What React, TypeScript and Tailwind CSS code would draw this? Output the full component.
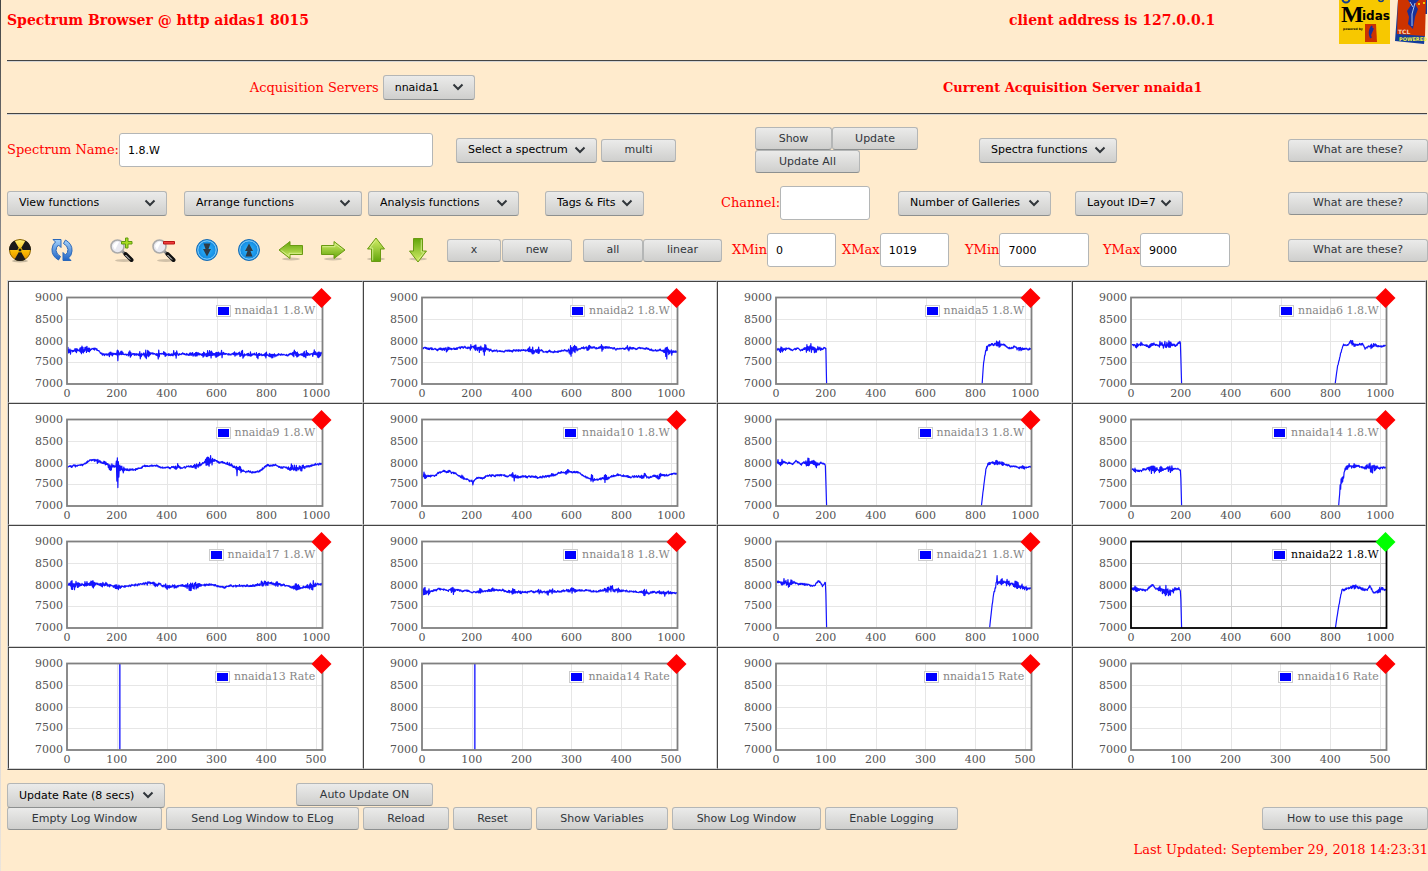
import type { ReactNode } from 'react';

type Point = [number, number];
type Burst = [center: number, width: number, amplitude: number];

interface Spectrum {
    name: string;
    xMax: number;
    active?: boolean;
    segments: Point[][];
    bursts: Burst[];
    spike?: number;
}

const SPECTRA: Spectrum[] = [
    {
        name: 'nnaida1 1.8.W',
        xMax: 1023,
        segments: [[[0, 7780], [30, 7765], [60, 7800], [90, 7810], [115, 7825], [140, 7690], [198, 7690], [200, 7790], [202, 7510], [204, 7780], [206, 7690], [400, 7690], [700, 7695], [870, 7680], [1023, 7695]]],
        bursts: [[5, 12, 50], [30, 10, 40], [55, 8, 60], [75, 10, 60], [172, 6, 60], [200, 3, 50], [215, 8, 50], [250, 4, 70], [290, 5, 60], [318, 8, 80], [365, 5, 80], [390, 8, 40], [432, 10, 60], [510, 12, 40], [545, 3, 100], [563, 6, 60], [575, 6, 80], [600, 8, 50], [620, 5, 70], [670, 5, 40], [700, 8, 80], [730, 8, 50], [760, 5, 80], [798, 4, 90], [820, 10, 40], [915, 8, 80], [955, 6, 90], [990, 5, 60], [1010, 10, 40]],
    },
    {
        name: 'nnaida2 1.8.W',
        xMax: 1023,
        segments: [[[0, 7830], [60, 7800], [120, 7820], [200, 7850], [240, 7820], [280, 7770], [420, 7780], [480, 7760], [520, 7750], [570, 7790], [620, 7820], [680, 7830], [720, 7860], [780, 7830], [880, 7830], [940, 7780], [1000, 7750], [1023, 7770]]],
        bursts: [[82, 6, 50], [100, 8, 30], [195, 4, 40], [222, 8, 100], [248, 8, 90], [430, 4, 60], [445, 6, 80], [465, 5, 70], [595, 5, 120], [612, 7, 80], [665, 5, 50], [720, 4, 60], [825, 6, 50], [980, 6, 150], [995, 8, 60]],
    },
    {
        name: 'nnaida5 1.8.W',
        xMax: 1023,
        segments: [
            [[0, 7825], [15, 7800], [50, 7820], [65, 7780], [85, 7860], [98, 7800], [112, 7830], [150, 7800], [185, 7820], [193, 7840], [198, 7800], [201, 7000]],
            [[825, 7000], [830, 7450], [838, 7740], [846, 7850], [850, 7920], [870, 7910], [890, 7950], [905, 7930], [925, 7870], [940, 7810], [955, 7860], [980, 7820], [1023, 7820]],
        ],
        bursts: [[5, 6, 40], [22, 8, 50], [125, 6, 70], [138, 6, 80], [160, 10, 70], [845, 5, 60], [890, 8, 60], [972, 8, 60]],
    },
    {
        name: 'nnaida6 1.8.W',
        xMax: 1023,
        segments: [
            [[0, 7910], [50, 7920], [68, 7880], [90, 7930], [105, 7900], [150, 7910], [175, 7890], [190, 7955], [196, 7960], [201, 7000]],
            [[817, 7000], [826, 7400], [838, 7700], [850, 7920], [868, 7880], [878, 7960], [900, 7920], [925, 7940], [937, 7825], [950, 7870], [970, 7890], [1000, 7870], [1023, 7890]],
        ],
        bursts: [[25, 10, 40], [75, 6, 30], [112, 6, 50], [135, 10, 60], [152, 8, 50], [890, 6, 60], [970, 12, 40]],
    },
    {
        name: 'nnaida9 1.8.W',
        xMax: 1023,
        segments: [[[0, 7910], [60, 7970], [90, 8050], [125, 8050], [150, 7990], [180, 7930], [194, 7920], [196, 8050], [198, 7560], [200, 8110], [202, 7410], [204, 8040], [206, 7640], [208, 7980], [210, 7880], [230, 7850], [270, 7850], [310, 7930], [350, 7930], [390, 7870], [430, 7890], [480, 7900], [530, 7970], [560, 8050], [590, 8060], [630, 8000], [660, 7930], [678, 7870], [680, 7700], [682, 7860], [710, 7800], [740, 7790], [770, 7830], [800, 7950], [840, 7940], [900, 7870], [950, 7900], [1000, 7970], [1023, 7990]]],
        bursts: [[120, 6, 40], [145, 6, 40], [170, 10, 70], [212, 6, 70], [225, 5, 50], [440, 5, 50], [520, 8, 70], [560, 6, 110], [575, 8, 90], [650, 10, 30], [680, 3, 50], [692, 5, 60], [900, 8, 70], [920, 6, 60], [940, 6, 70]],
    },
    {
        name: 'nnaida10 1.8.W',
        xMax: 1023,
        segments: [[[0, 7690], [30, 7690], [70, 7780], [110, 7815], [130, 7770], [160, 7650], [190, 7600], [200, 7600], [202, 7490], [204, 7610], [220, 7640], [270, 7710], [310, 7710], [400, 7680], [440, 7670], [500, 7680], [550, 7770], [590, 7800], [620, 7770], [660, 7660], [700, 7600], [740, 7650], [780, 7730], [830, 7700], [880, 7680], [930, 7690], [990, 7710], [1023, 7760]]],
        bursts: [[5, 6, 60], [105, 10, 20], [160, 6, 40], [200, 4, 40], [365, 5, 70], [380, 8, 30], [515, 6, 30], [575, 12, 25], [680, 4, 80], [735, 5, 90], [890, 10, 40], [950, 8, 40]],
    },
    {
        name: 'nnaida13 1.8.W',
        xMax: 1023,
        segments: [
            [[0, 8000], [50, 7985], [65, 7955], [78, 8040], [90, 8000], [98, 7975], [110, 8010], [150, 7990], [185, 7990], [196, 7940], [201, 7000]],
            [[822, 7000], [832, 7500], [840, 7850], [848, 7980], [880, 8010], [910, 7990], [930, 7920], [960, 7930], [985, 7890], [1023, 7900]],
        ],
        bursts: [[5, 6, 40], [18, 6, 50], [125, 6, 80], [145, 8, 70], [160, 8, 50], [880, 12, 25], [905, 6, 25], [992, 4, 40]],
    },
    {
        name: 'nnaida14 1.8.W',
        xMax: 1023,
        segments: [
            [[0, 7850], [30, 7830], [60, 7850], [110, 7850], [155, 7870], [190, 7850], [197, 7840], [201, 7000]],
            [[831, 7000], [836, 7380], [846, 7600], [856, 7820], [870, 7930], [900, 7940], [950, 7890], [1000, 7880], [1015, 7890], [1023, 7860]],
        ],
        bursts: [[15, 6, 30], [80, 8, 80], [95, 8, 50], [115, 6, 80], [155, 8, 70], [843, 8, 80], [870, 8, 50], [890, 8, 40], [955, 10, 70], [970, 8, 80]],
    },
    {
        name: 'nnaida17 1.8.W',
        xMax: 1023,
        segments: [[[0, 7980], [50, 8010], [100, 8020], [150, 8000], [210, 7960], [260, 7980], [310, 8030], [340, 8040], [390, 7980], [430, 7960], [480, 7990], [530, 8010], [560, 7990], [620, 7970], [760, 7990], [800, 8050], [850, 8010], [890, 7970], [930, 7930], [960, 7980], [990, 8010], [1023, 8010]]],
        bursts: [[18, 8, 100], [35, 8, 60], [70, 10, 50], [100, 10, 50], [150, 10, 50], [200, 10, 40], [320, 10, 25], [355, 8, 40], [400, 8, 50], [425, 10, 40], [490, 10, 80], [515, 12, 80], [780, 10, 40], [800, 6, 50], [840, 10, 40], [915, 8, 70], [930, 5, 50], [980, 12, 80]],
    },
    {
        name: 'nnaida18 1.8.W',
        xMax: 1023,
        segments: [[[0, 7860], [30, 7830], [60, 7900], [120, 7900], [200, 7840], [250, 7860], [280, 7900], [340, 7850], [500, 7840], [560, 7860], [610, 7880], [700, 7850], [760, 7900], [820, 7860], [880, 7840], [930, 7840], [1023, 7810]]],
        bursts: [[5, 8, 60], [25, 8, 50], [122, 5, 90], [230, 6, 40], [275, 8, 30], [360, 10, 40], [400, 8, 30], [470, 6, 40], [505, 4, 90], [520, 6, 40], [600, 12, 40], [740, 6, 50], [760, 6, 80], [785, 8, 30], [892, 5, 90], [950, 6, 40], [975, 10, 40]],
    },
    {
        name: 'nnaida21 1.8.W',
        xMax: 1023,
        segments: [
            [[0, 8070], [30, 8060], [45, 8020], [65, 8060], [100, 8010], [155, 8000], [168, 8090], [185, 7980], [197, 8060], [201, 7000]],
            [[855, 7000], [863, 7450], [871, 7800], [880, 7990], [885, 8180], [887, 8060], [905, 8090], [930, 8050], [960, 7990], [985, 7960], [1023, 7930]],
        ],
        bursts: [[30, 8, 60], [50, 10, 70], [885, 5, 50], [905, 6, 50], [925, 8, 70], [960, 8, 70], [978, 8, 60], [1000, 8, 30]],
    },
    {
        name: 'nnaida22 1.8.W',
        xMax: 1023,
        active: true,
        segments: [
            [[0, 7900], [60, 7880], [85, 7970], [98, 7880], [120, 7910], [145, 7860], [165, 7880], [190, 7920], [197, 7870], [201, 7000]],
            [[818, 7000], [828, 7400], [838, 7720], [845, 7910], [852, 7880], [885, 7960], [900, 7960], [930, 7900], [945, 7890], [957, 7960], [970, 7850], [990, 7860], [1010, 7900], [1023, 7890]],
        ],
        bursts: [[20, 10, 50], [120, 8, 70], [137, 6, 90], [152, 6, 80], [170, 6, 40], [892, 10, 50], [930, 8, 40], [995, 8, 50]],
    },
    { name: 'nnaida13 Rate', xMax: 512, segments: [], bursts: [], spike: 105 },
    { name: 'nnaida14 Rate', xMax: 512, segments: [], bursts: [], spike: 105 },
    { name: 'nnaida15 Rate', xMax: 512, segments: [], bursts: [] },
    { name: 'nnaida16 Rate', xMax: 512, segments: [], bursts: [] },
];

const Y_LABELS = [
    { value: 9000, y: 19 },
    { value: 8500, y: 41 },
    { value: 8000, y: 63 },
    { value: 7500, y: 83 },
    { value: 7000, y: 105 },
];

const toY = (value: number) => 102 - ((value - 7000) / 2000) * 86;

// Small seeded generator so that a spectrum draws the same trace each time
function noise(seed: number) {
    let state = seed * 7919 + 17;
    return () => {
        state = (state * 16807) % 2147483647;
        return (state / 2147483647) * 2 - 1;
    };
}

function interpolate(points: Point[], x: number) {
    for (let i = 1; i < points.length; i++) {
        const [x0, y0] = points[i - 1];
        const [x1, y1] = points[i];
        if (x <= x1) return y0 + ((y1 - y0) * (x - x0)) / (x1 - x0);
    }
    return points[points.length - 1][1];
}

function tracePath({ segments, bursts, xMax }: Spectrum, seed: number) {
    const random = noise(seed + 3);
    let d = '';
    for (const points of segments) {
        const start = points[0][0];
        const end = points[points.length - 1][0];
        let sign = 1;
        let drift = 0;
        for (let x = start; x <= end; x += 2) {
            let amplitude = 20;
            for (const [center, width, size] of bursts) {
                const distance = (x - center) / (width * 1.2);
                amplitude += size * 1.25 * Math.exp(-distance * distance);
            }
            sign = -sign;
            drift = drift * 0.8 + random() * 12;
            const base = interpolate(points, x);
            const swing = base < 7300 ? 0 : sign * amplitude * (0.5 + 0.5 * random()) + drift;
            const y = Math.min(102, toY(base + swing));
            d += `${x === start ? 'M' : 'L'}${(58.5 + (x / xMax) * 255).toFixed(2)} ${y.toFixed(2)}`;
        }
        if (end < 300) d += `L${(58.5 + (201 / xMax) * 255).toFixed(2)} 102`;
    }
    return d;
}

function SpectrumPlot({ spectrum, index }: { spectrum: Spectrum; index: number }) {
    const step = spectrum.xMax > 600 ? 200 : 100;
    const ticks = [0, 1, 2, 3, 4, 5].map((n) => n * step);
    const toX = (value: number) => 58.5 + (value / spectrum.xMax) * 255;
    const frame = spectrum.active ? '#000000' : '#808080';
    const grid = spectrum.active ? '#cfcfcf' : '#e6e6e6';

    return (
        <div className="flex justify-center border border-t-[#444444] border-l-[#444444] border-r-[#d4d4d4] border-b-[#d4d4d4] bg-white">
            <div className="relative">
                <svg width="352" height="120" viewBox="0 0 352 120" className="block">
                    {ticks.slice(1).map((tick) => (
                        <path key={tick} d={`M${Math.floor(toX(tick)) + 0.5} 16V102`} stroke={grid} />
                    ))}
                    {[8500, 8000, 7500].map((value) => (
                        <path key={value} d={`M59 ${Math.floor(toY(value)) + 0.5}H314`} stroke={grid} />
                    ))}
                    <path d={tracePath(spectrum, index)} fill="none" stroke="#1414ff" strokeWidth="1.2" strokeLinejoin="round" />
                    {spectrum.spike && <path d={`M${toX(spectrum.spike)} 16V102`} stroke="#4040ff" strokeWidth="1.7" />}
                    <rect x="58" y="15.5" width="255.5" height="86.5" fill="none" stroke={frame} strokeWidth="1.8" />
                    <path d="M312.500 6L322.500 16L312.500 26L302.500 16Z" fill={spectrum.active ? '#00ff00' : '#ff0000'} />
                    <g fill="#545454" className="font-['DejaVu_Serif',serif] text-[11px]">
                        {Y_LABELS.map(({ value, y }) => (
                            <text key={value} x="54" y={y} textAnchor="end">{value}</text>
                        ))}
                        {ticks.map((tick) => (
                            <text key={tick} x={toX(tick) - 0.5} y="115" textAnchor="middle">{tick}</text>
                        ))}
                    </g>
                </svg>
                <div className="absolute top-[21px] right-[46px] flex items-center gap-1">
                    <span className="h-3 w-[15px] border border-[#cccccc] bg-white p-px">
                        <span className="block h-full bg-[#0000ff]"></span>
                    </span>
                    <span className={spectrum.active ? 'text-[11px] leading-4 text-black' : 'text-[11px] leading-4 text-[#868686]'}>{spectrum.name}</span>
                </div>
            </div>
        </div>
    );
}

function Button({ width, children }: { width: string; children: ReactNode }) {
    return (
        <button type="button" className={`h-[23px] shrink-0 rounded-[3px] border border-[#b4b6b6] border-b-[#8d9090] bg-linear-to-b from-[#ebebea] to-[#cfcfcd] text-center font-['DejaVu_Sans',sans-serif] text-[11px] leading-4 whitespace-nowrap text-[#31363b] ${width}`}>
            {children}
        </button>
    );
}

function Select({ id, label, width }: { id: string; label: string; width: string }) {
    return (
        <div className={`relative shrink-0 ${width}`}>
            <select id={id} aria-label={label} className="block h-[25px] w-full appearance-none rounded-[3px] border border-[#b4b6b6] border-b-[#8d9090] bg-linear-to-b from-[#ebebea] to-[#cfcfcd] pl-[11px] font-['DejaVu_Sans',sans-serif] text-[11px] text-black">
                <option>{label}</option>
            </select>
            <svg width="12" height="8" viewBox="0 0 12 8" className="pointer-events-none absolute top-2 right-[11px]">
                <path d="M1.500 1.500L6 6L10.500 1.500" fill="none" stroke="#31363b" strokeWidth="2" />
            </svg>
        </div>
    );
}

function Field({ id, label, value, width }: { id: string; label: string; value: string; width: string }) {
    return (
        <div className="flex items-center">
            <label htmlFor={id} className="whitespace-nowrap">{label}</label>
            <input id={id} type="text" defaultValue={value} className={`h-[34px] rounded-[3px] border border-[#b4b6b6] bg-white px-2 font-['DejaVu_Sans',sans-serif] text-[11px] text-black ${width}`} />
        </div>
    );
}

function Rule() {
    return <hr className="mr-px h-[2px] border-t border-b border-t-[#444444] border-b-[#d4d4d4]" />;
}

function Arrow({ angle }: { angle: number }) {
    return (
        <svg width="26" height="26" viewBox="0 0 26 26">
            <ellipse cx="13" cy="22" rx="9" ry="1.500" fill="#8c8370" opacity=".4" />
            <g transform={`rotate(${angle} 13 13)`}>
                <path d="M1.500 8.500H14V4.500L25 13L14 21.500V17.500H1.500Z" fill={angle % 180 === 0 ? 'url(#green)' : 'url(#green-side)'} stroke="#6a9a12" />
                <path d="M2.500 9.700H15V6.800L22.500 12.500" fill="none" stroke="#dcf29a" opacity=".8" />
            </g>
        </svg>
    );
}

function Magnifier({ plus }: { plus?: boolean }) {
    return (
        <svg width="26" height="26" viewBox="0 0 26 26">
            <ellipse cx="15" cy="23.500" rx="9" ry="1.500" fill="#8c8370" opacity=".4" />
            <path d="M13 14L22.500 22.500" stroke="#8b8b8b" strokeWidth="3" />
            <path d="M16.500 17L22.500 23" stroke="#111111" strokeWidth="4" strokeLinecap="round" />
            <path d="M16.500 18L21 22.500" stroke="#ffffff" strokeWidth="1" />
            <circle cx="8.500" cy="9.500" r="6.500" fill="#e9e9f0" stroke="#aaaaaa" strokeWidth="1.600" />
            <path d="M4 9A5 5 0 0 1 10 5L6 13Z" fill="#ffffff" />
            {plus ? (
                <path d="M16.500 1H19V4.500H23V7H19V11H16.500V7H12.500V4.500H16.500Z" fill="#a8dc22" stroke="#5f9a10" />
            ) : (
                <path d="M12.500 4.500H23.500V7H12.500Z" fill="#ef3b3b" stroke="#b81414" />
            )}
        </svg>
    );
}

function DoubleArrow({ up }: { up?: boolean }) {
    return (
        <svg width="26" height="26" viewBox="0 0 26 26">
            <circle cx="13" cy="13" r="10.500" fill="url(#blue)" stroke="#1b6eb5" />
            <circle cx="13" cy="13" r="9.200" fill="none" stroke="#8fd4fb" />
            <path d="M9.500 6.500H16.500L14.500 12H17L13 19.500L9 12H11.500Z" fill="#2f3b46" transform={up ? 'rotate(180 13 13)' : undefined} />
        </svg>
    );
}

function IconButton({ label, children }: { label: string; children: ReactNode }) {
    return (
        <button type="button" aria-label={label} className="shrink-0">
            {children}
        </button>
    );
}

function Gradients() {
    return (
        <svg className="absolute h-0 w-0" aria-hidden="true">
            <defs>
                <linearGradient id="green" x1="0" y1="0" x2="0" y2="1">
                    <stop offset="0" stopColor="#d5ee6a" />
                    <stop offset="1" stopColor="#62a50a" />
                </linearGradient>
                <linearGradient id="green-side" x1="0" y1="0" x2="1" y2="0">
                    <stop offset="0" stopColor="#62a50a" />
                    <stop offset="1" stopColor="#d5ee6a" />
                </linearGradient>
                <radialGradient id="blue">
                    <stop offset="0" stopColor="#32b8ff" />
                    <stop offset="1" stopColor="#0d83dd" />
                </radialGradient>
                <linearGradient id="yellow" x1="0" y1="0" x2="0" y2="1">
                    <stop offset="0" stopColor="#fff07a" />
                    <stop offset=".6" stopColor="#f9b700" />
                    <stop offset="1" stopColor="#e09000" />
                </linearGradient>
                <linearGradient id="refresh" x1="0" y1="0" x2="0" y2="1">
                    <stop offset="0" stopColor="#a6d3fb" />
                    <stop offset="1" stopColor="#1f63c4" />
                </linearGradient>
            </defs>
        </svg>
    );
}

function Logos() {
    return (
        <svg width="89" height="44" viewBox="0 0 89 44" className="block">
            {/* Midas */}
            <rect width="51" height="44" fill="#f7c800" />
            <circle cx="7" cy="-1" r="3.500" fill="#f7c800" stroke="#123c8c" strokeWidth="2" />
            <circle cx="42" cy="-1" r="2.500" fill="none" stroke="#123c8c" strokeWidth="1.500" />
            <text x="2" y="22" fontSize="24" fontWeight="700" fontFamily="Liberation Serif">M</text>
            <text x="23" y="20" fontSize="12" fontWeight="700" fontFamily="DejaVu Sans">idas</text>
            <text x="4" y="30" fontSize="3" fontWeight="700" fontFamily="DejaVu Sans">powered by</text>
            <path d="M26 24H37L38 42H26Z" fill="#cc3300" />
            <path d="M33 26Q29 32 32 38M34 28L31 35" stroke="#18309a" strokeWidth="2" fill="none" />
            {/* Tcl powered */}
            <path d="M59 0H88V14H86V35L85 44L56 41Z" fill="#123c9c" />
            <path d="M59 0H87L86 36L58 34Z" fill="#cc3300" />
            <path d="M69 0L72 5L68 11L70 17L69 24L74 29L76 17L79 9L76 4L80 0Z" fill="#18309a" />
            <path d="M76 3L73 14L73 26M71 2L74 7" stroke="#a9c5ee" strokeWidth="1" fill="none" />
            <path d="M79 4H81M84 3H86" stroke="#f7c800" strokeWidth="2" />
            <text x="59" y="34" fontSize="6" fill="#f4d8c0" fontFamily="DejaVu Sans">TCL</text>
            <text x="60" y="41" fontSize="5" fontWeight="700" fill="#f4f040" fontFamily="DejaVu Sans">POWERED</text>
        </svg>
    );
}

export default function App() {
    return (
        <div className="flex min-h-screen bg-[#ffebcd] font-['DejaVu_Serif',serif] text-[13px] leading-4 text-[#ff0000]">
            <Gradients />
            <div className="mr-[6px] w-px shrink-0 bg-linear-to-b from-[#444444] via-[#c4c4cc] to-[#ebe4dc]"></div>
            <main className="min-w-0 grow">
                <header className="grid h-[60px] grid-cols-[1002fr_330fr_89fr] items-start text-[14px] font-bold">
                    <h1 className="pt-3">Spectrum Browser @ http aidas1 8015</h1>
                    <p className="pt-3">client address is 127.0.0.1</p>
                    <Logos />
                </header>
                <Rule />

                <section className="grid h-[51px] grid-cols-2 items-center">
                    <div className="flex items-center justify-center gap-1">
                        <label htmlFor="servers">Acquisition Servers</label>
                        <Select id="servers" label="nnaida1" width="w-[92px]" />
                    </div>
                    <h2 className="text-center font-bold">Current Acquisition Server nnaida1</h2>
                </section>
                <Rule />

                <section className="mt-3 grid grid-cols-[449fr_299fr_224fr_309fr_auto] items-center">
                    <Field id="spectrum-name" label="Spectrum Name:" value="1.8.W" width="w-[314px]" />
                    <div className="flex items-center gap-1">
                        <Select id="spectrum" label="Select a spectrum" width="w-[141px]" />
                        <Button width="w-[75px]">multi</Button>
                    </div>
                    <div className="flex flex-wrap">
                        <Button width="w-[77px]">Show</Button>
                        <Button width="w-[86px]">Update</Button>
                        <Button width="w-[105px]">Update All</Button>
                    </div>
                    <Select id="spectra-functions" label="Spectra functions" width="w-[138px]" />
                    <Button width="w-[140px]">What are these?</Button>
                </section>

                <section className="mt-[13px] grid grid-cols-[177fr_184fr_177fr_176fr_177fr_177fr_213fr_auto] items-center">
                    <Select id="view" label="View functions" width="w-[160px]" />
                    <Select id="arrange" label="Arrange functions" width="w-[178px]" />
                    <Select id="analysis" label="Analysis functions" width="w-[151px]" />
                    <Select id="tags" label="Tags & Fits" width="w-[99px]" />
                    <Field id="channel" label="Channel:" value="" width="w-[90px]" />
                    <Select id="galleries" label="Number of Galleries" width="w-[153px]" />
                    <Select id="layout" label="Layout ID=7" width="w-[108px]" />
                    <Button width="w-[140px]">What are these?</Button>
                </section>

                <section className="mt-[13px] grid grid-cols-[102fr_338fr_136fr_149fr_110fr_123fr_138fr_185fr_auto] items-center">
                    <div className="flex items-center gap-4">
                        <IconButton label="Clear">
                            <svg width="26" height="26" viewBox="0 0 26 26">
                                <ellipse cx="13" cy="24" rx="8" ry="1.500" fill="#8c8370" opacity=".5" />
                                <circle cx="13" cy="13" r="10.500" fill="url(#yellow)" stroke="#8a6500" />
                                <path d="M13 13L7.500 3.500A11 11 0 0 0 2 13ZM13 13H24A11 11 0 0 0 18.500 3.500ZM13 13L7.500 22.500A11 11 0 0 0 18.500 22.500Z" fill="#1b1b1b" />
                                <circle cx="13" cy="13" r="2" fill="#1b1b1b" stroke="#f5c400" />
                            </svg>
                        </IconButton>
                        <IconButton label="Refresh">
                            <svg width="26" height="26" viewBox="0 0 26 26">
                                <path d="M9.500 23Q2.500 19 3 12Q3.500 7 6.500 5L4 2.500H12V10.500L9.500 8Q7 10 7 13.500Q7.500 17.500 11.500 19.500Z" fill="url(#refresh)" stroke="#2a68ba" />
                                <path d="M16.500 3Q23.500 7 23 14Q22.500 19 19.500 21L22 23.500H14V15.500L16.500 18Q19 16 19 12.500Q18.500 8.500 14.500 6.500Z" fill="url(#refresh)" stroke="#2a68ba" />
                            </svg>
                        </IconButton>
                    </div>
                    <div className="flex items-center justify-between pr-4">
                        <IconButton label="Zoom in"><Magnifier plus /></IconButton>
                        <IconButton label="Zoom out"><Magnifier /></IconButton>
                        <IconButton label="Compress"><DoubleArrow /></IconButton>
                        <IconButton label="Expand"><DoubleArrow up /></IconButton>
                        <IconButton label="Left"><Arrow angle={180} /></IconButton>
                        <IconButton label="Right"><Arrow angle={0} /></IconButton>
                        <IconButton label="Up"><Arrow angle={-90} /></IconButton>
                        <IconButton label="Down"><Arrow angle={90} /></IconButton>
                    </div>
                    <div className="flex gap-px">
                        <Button width="w-[54px]">x</Button>
                        <Button width="w-[70px]">new</Button>
                    </div>
                    <div className="flex">
                        <Button width="w-[60px]">all</Button>
                        <Button width="w-[79px]">linear</Button>
                    </div>
                    <Field id="xmin" label="XMin" value="0" width="w-[69px]" />
                    <Field id="xmax" label="XMax" value="1019" width="w-[69px]" />
                    <Field id="ymin" label="YMin" value="7000" width="w-[90px]" />
                    <Field id="ymax" label="YMax" value="9000" width="w-[90px]" />
                    <Button width="w-[140px]">What are these?</Button>
                </section>

                <section className="mt-[13px] mr-px grid grid-cols-4 border border-t-[#d4d4d4] border-l-[#d4d4d4] border-r-[#444444] border-b-[#444444]">
                    {SPECTRA.map((spectrum, index) => (
                        <SpectrumPlot key={spectrum.name} spectrum={spectrum} index={index} />
                    ))}
                </section>

                <footer className="pt-[13px]">
                    <div className="grid h-6 grid-cols-[289fr_1132fr] items-start">
                        <Select id="update-rate" label="Update Rate (8 secs)" width="w-[158px]" />
                        <div>
                            <Button width="w-[137px]">Auto Update ON</Button>
                        </div>
                    </div>
                    <div className="flex gap-1">
                        <Button width="w-[155px]">Empty Log Window</Button>
                        <Button width="w-[193px]">Send Log Window to ELog</Button>
                        <Button width="w-[86px]">Reload</Button>
                        <Button width="w-[79px]">Reset</Button>
                        <Button width="w-[132px]">Show Variables</Button>
                        <Button width="w-[149px]">Show Log Window</Button>
                        <Button width="w-[133px]">Enable Logging</Button>
                        <div className="ml-auto">
                            <Button width="w-[166px]">How to use this page</Button>
                        </div>
                    </div>
                    <p className="mt-3 text-right">Last Updated: September 29, 2018 14:23:31</p>
                </footer>
            </main>
        </div>
    );
}
